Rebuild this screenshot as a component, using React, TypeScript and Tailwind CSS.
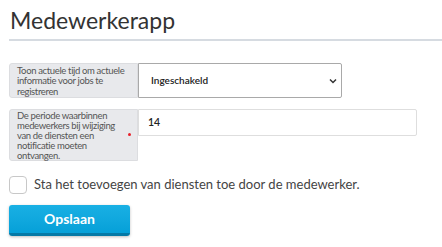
import React from "react";

export default function App() {
  const font = { fontFamily: "Lato, 'Open Sans', sans-serif" };
  return (
    <div className="w-[442px] h-[247px] bg-white overflow-hidden pl-[9px]" style={font}>
      <h1 className="pt-[6px] h-[39px] text-[23px] leading-[28px] text-[#333] pl-[1px]">Medewerkerapp</h1>
      <div className="h-[2px] bg-[#d6dbe1] mr-[-20px]" />
      <div className="mt-[22px] flex items-stretch">
        <div className="w-[129px] h-[35px] bg-[#e8e9ec] border border-[#dcdde0] rounded-l-[3px] pl-[7px] pt-[2px] text-[9.5px] tracking-[-0.35px] leading-[10.3px] text-[#555] whitespace-nowrap overflow-hidden">
          Toon actuele tijd om actuele
          <br />
          informatie voor jobs te
          <br />
          registreren
        </div>
        <div className="w-[204px] h-[35px] border border-[#a9a9a9] rounded-r-[2px] flex items-center justify-between pl-[12px] pr-[4px] text-[10px] font-semibold text-[#222]">
          <span>Ingeschakeld</span>
          <svg width="8" height="6" viewBox="0 0 8 6">
            <path d="M1 1.5 L4 4.5 L7 1.5" fill="none" stroke="#333" strokeWidth="1.5" />
          </svg>
        </div>
      </div>
      <div className="mt-[11px] flex items-start">
        <div className="relative w-[129px] h-[52px] bg-[#e8e9ec] border border-[#dcdde0] rounded-l-[3px] pl-[7px] pt-[1px] text-[9.5px] tracking-[-0.35px] leading-[10.1px] text-[#555] whitespace-nowrap">
          De periode waarbinnen
          <br />
          medewerkers bij wijziging
          <br />
          van de diensten een
          <br />
          notificatie moeten
          <br />
          ontvangen.
          <span className="absolute left-[118px] top-[23px] w-[3px] h-[3px] rounded-full bg-[#e8202a]" />
        </div>
        <div className="w-[279px] h-[27px] border border-[#dedede] rounded-r-[2px] flex items-center pl-[9px] text-[10.5px] font-semibold text-[#222]">
          14
        </div>
      </div>
      <div className="mt-[14px] flex items-center gap-[7px]">
        <div className="w-[18px] h-[18px] border border-[#c8c8c8] rounded-[4px] bg-white" />
        <span className="text-[13px] text-[#444]">Sta het toevoegen van diensten toe door de medewerker.</span>
      </div>
      <button className="mt-[10px] w-[121px] h-[31px] rounded-[3px] bg-gradient-to-b from-[#19b0e4] to-[#05a0d8] border-b-[3px] border-[#0479a6] text-white text-[14px] font-bold shadow-[0_1px_3px_rgba(0,0,0,0.25)]">
        Opslaan
      </button>
    </div>
  );
}
